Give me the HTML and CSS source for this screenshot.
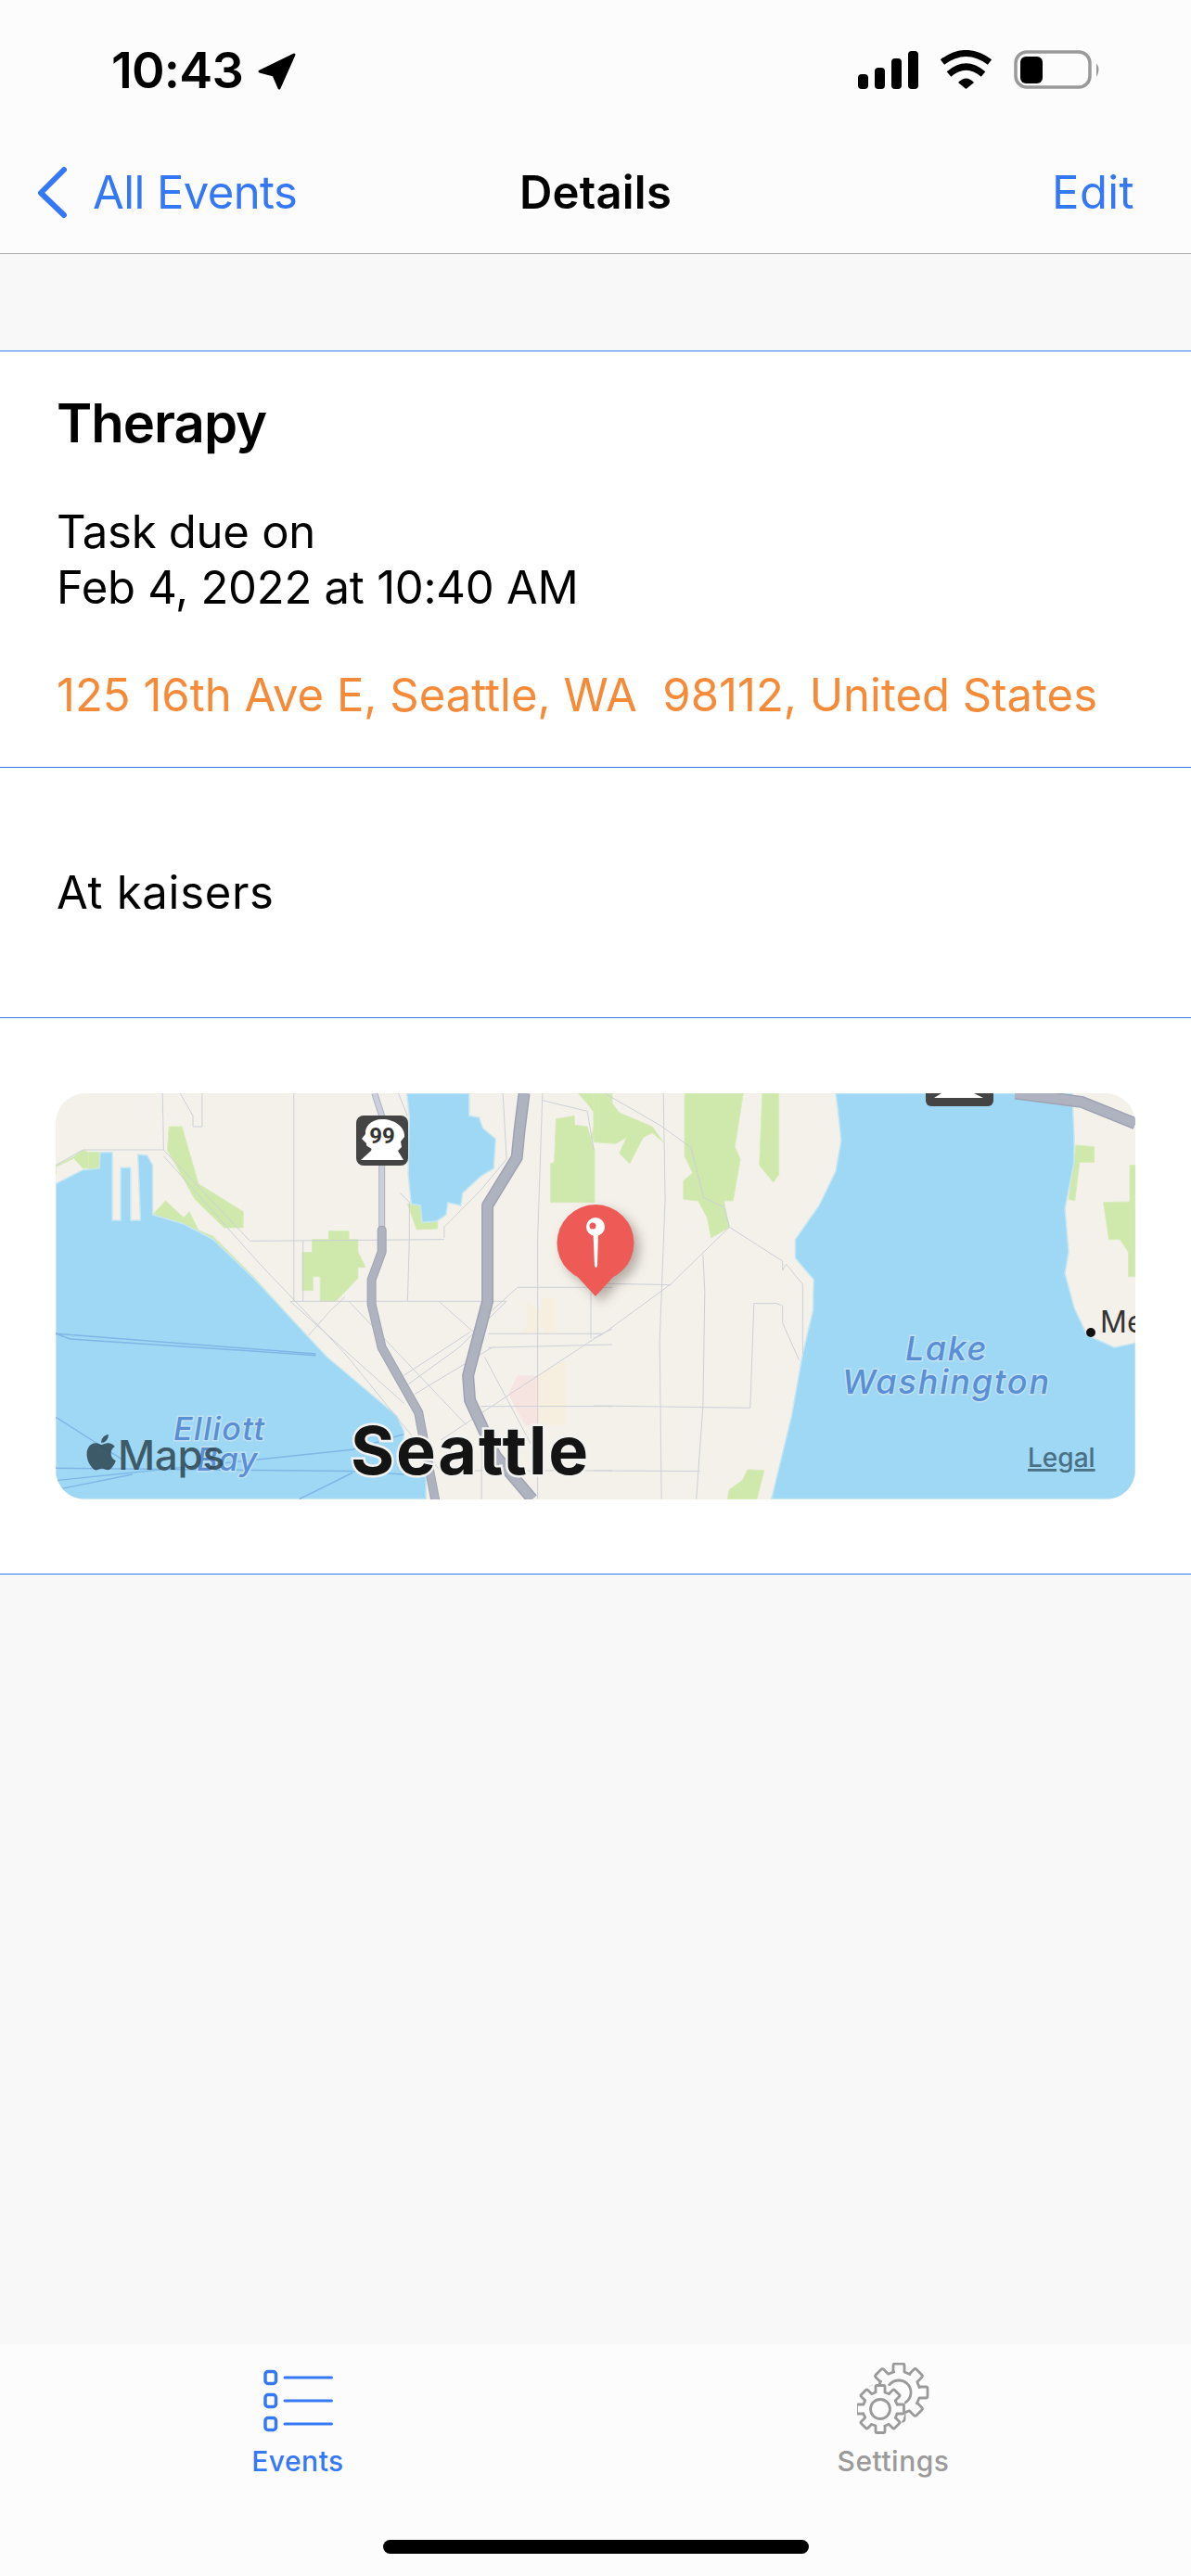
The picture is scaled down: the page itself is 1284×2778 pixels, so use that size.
FILE: index.html
```html
<!DOCTYPE html>
<html lang="en">
<head>
<meta charset="utf-8">
<title>Details</title>
<link rel="stylesheet" href="styles.css">
</head>
<body>
<div class="screen">
  <header class="header">
    <div class="status">
      <div class="status-time">
        <span class="time">10:43</span>
        <svg class="arrow" width="46" height="44" viewBox="0 0 46 44"><path d="M43 5 L6 23 L21 27 L27 41 Z" fill="#000" stroke="#000" stroke-width="3" stroke-linejoin="round"/></svg>
      </div>
      <div class="status-icons">
        <svg width="65" height="42" viewBox="0 0 65 42"><rect x="0" y="26" width="11" height="16" rx="4"/><rect x="18" y="19" width="11" height="23" rx="4"/><rect x="36" y="9" width="11" height="33" rx="4"/><rect x="54" y="1" width="11" height="41" rx="4"/></svg>
        <svg width="57" height="42" viewBox="0 0 57 42"><path d="M3 13 Q28.500 -6 54 13" fill="none" stroke="#000" stroke-width="7"/><path d="M10 26 Q28.500 10 47 26" fill="none" stroke="#000" stroke-width="7"/><path d="M20 35 L28.500 42 L37 35 Q28.500 26 20 35 Z"/></svg>
        <svg width="94" height="42" viewBox="0 0 94 42"><rect x="2" y="2" width="80" height="38" rx="12" fill="none" stroke="#999" stroke-width="3.500"/><rect x="7" y="7" width="24" height="29" rx="6"/><path d="M89 14 Q94 21 89 29 Z" fill="#999"/></svg>
      </div>
    </div>
    <nav class="nav">
      <a class="nav-back">
        <svg width="34" height="60" viewBox="0 0 34 60"><path d="M31 5 L6 30 L31 54" fill="none" stroke="#3478f6" stroke-width="6" stroke-linecap="round" stroke-linejoin="round"/></svg>
        <span>All Events</span>
      </a>
      <div class="nav-title">Details</div>
      <a class="nav-edit">Edit</a>
    </nav>
  </header>

  <div class="band"></div>

  <section class="card card-info">
    <h1 class="title">Therapy</h1>
    <p class="due">Task due on<br>Feb 4, 2022 at 10:40 AM</p>
    <p class="address">125 16th Ave E, Seattle, WA  98112, United States</p>
  </section>

  <section class="card card-note">At kaisers</section>

  <section class="card card-map">
    <div class="map">
      <svg class="map-svg" width="1164" height="438" viewBox="0 0 1164 438">
        <rect width="1164" height="438" fill="#f4f1ea"/>
        <g transform="matrix(.3954 0 0 .3333 -20 -19)">
          <path class="tint" d="M1335 735 L1375 760 L1375 720 L1415 720 L1415 832 L1385 832 L1375 805 L1365 832 L1320 832 L1335 815 Z"/>
          <path class="tint" d="M1365 970 L1440 920 L1440 1130 L1365 1130 Z"/>
          <path class="tint-pink" d="M1310 970 L1365 970 L1365 1130 L1330 1130 L1285 1030 Z"/>
          <path class="park" d="M51 320 L51 295 L100 268 L125 300 L160 298 L170 248 L140 248 L125 240 L100 262 L51 290 Z"/>
          <path class="park" d="M140 248 L205 248 L170 300 L140 302 Z"/>
          <path class="park" d="M360 165 L395 165 L440 350 L562 440 L562 492 L510 492 L430 400 L355 240 Z"/>
          <path class="park" d="M315 450 L350 405 L400 460 L415 440 L440 500 L480 520 L590 650 L735 840 L600 690 L480 540 L400 480 Z"/>
          <path class="park" d="M750 530 L795 530 L795 503 L850 503 L850 530 L875 530 L875 570 L895 620 L875 620 L875 655 L815 730 L772 730 L772 650 L752 650 L752 695 L723 695 L723 572 L750 572 Z"/>
          <path class="park" d="M1010 415 L1045 420 L1050 475 L1092 470 L1092 495 L1035 498 Z"/>
          <path class="park" d="M1415 140 L1465 130 L1465 160 L1500 165 L1520 240 L1520 410 L1400 410 L1400 285 L1410 280 Z"/>
          <path class="park" d="M1475 57 L1568 57 L1568 215 L1510 205 L1525 130 L1500 90 Z"/>
          <path class="water" d="M51 350 L125 305 L170 300 L172 248 L205 248 L205 468 L228 468 L228 298 L255 298 L255 468 L282 468 L275 255 L300 258 L315 290 L315 450 L400 480 L480 530 L590 655 L735 840 L790 910 L880 1000 L980 1100 L1000 1150 L1000 1250 L1060 1300 L1060 1370 L51 1370 Z"/>
          <path class="water" d="M1008 57 L1178 57 L1178 130 L1205 135 L1215 170 L1250 205 L1245 300 L1210 325 L1160 380 L1155 420 L1120 410 L1115 450 L1090 470 L1050 475 L1045 420 L1020 415 L1012 320 L1015 130 Z"/>
          <path class="ferry" d="M51 835 L90 852 L760 905 M51 835 L760 900 M51 1105 L230 1240 M51 1270 L860 1280 M51 1310 L860 1210 M51 1340 L260 1290 M715 1370 L860 1285 M860 1280 L1000 1290 M860 1210 L1000 1160"/>
          <path class="road" d="M342 57 L345 240 L125 240 L51 290 M700 57 L700 730 M725 535 L725 730 M1015 530 L1010 730 M1378 57 L1365 520 L1365 1370 M1510 700 L1510 850 M1212 1130 L1212 1370 M580 535 L1110 530 M690 730 L1280 730 M1310 685 L1568 685 M1230 835 L1540 835 M1230 880 L1568 870 M1210 1070 L1568 1070 M1100 1278 L1568 1278 M345 240 L580 535 M345 260 L600 600 L840 900 L1100 1280 M690 730 L1000 1060 M850 730 L1170 1130 M1095 730 L1200 840 M740 840 L800 760 L840 715 M1280 730 L1150 880 L1010 1000 M1310 685 L1240 760 M1568 820 L1540 835 L1290 1030 L1100 1180 M1000 970 L1180 830 M1030 1030 L1240 880 M1220 910 L1350 1200 M390 57 L425 130 L425 165 L450 165 L450 57 M985 57 L1010 130 M990 380 L1015 410 L1015 530 M1110 525 L1110 490 L1210 370 L1280 270 L1270 57 M1378 80 L1500 115 L1518 240"/>
          <path class="hw-thin-o" d="M920 57 L940 130 L940 490"/>
          <path class="hw-thin" d="M920 57 L940 130 L940 490"/>
          <path class="hw-mid-o" d="M940 500 L940 570 L912 660 L912 740 L940 880 L1040 1090 L1085 1370"/>
          <path class="hw-mid" d="M940 500 L940 570 L912 660 L912 740 L940 880 L1040 1090 L1085 1370"/>
          <path class="hw-o" d="M1328 57 L1315 180 L1308 265 L1228 420 L1228 730 L1175 970 L1180 1050 L1250 1230 L1350 1370"/>
          <path class="hw" d="M1328 57 L1315 180 L1308 265 L1228 420 L1228 730 L1175 970 L1180 1050 L1250 1230 L1350 1370"/>
        </g>
        <g transform="matrix(.3954 0 0 .3333 580 -19)">
          <path class="park" d="M248 57 L408 57 L385 230 L400 270 L380 405 L355 405 L370 490 L320 525 L310 460 L285 405 L245 400 L245 340 L270 315 L248 260 Z"/>
          <path class="park" d="M460 57 L505 57 L505 320 L490 345 L452 290 Z"/>
          <path class="park" d="M0 57 L30 57 L70 120 L160 165 L190 215 L160 185 L135 200 L98 285 L70 250 L90 200 L60 220 L0 215 Z"/>
          <path class="park" d="M1315 225 L1365 230 L1365 280 L1325 280 L1312 405 L1295 400 Z"/>
          <path class="park" d="M1462 290 L1477 290 L1477 650 L1458 650 L1458 570 L1435 530 L1405 530 L1390 410 L1462 408 Z"/>
          <path class="park" d="M420 1275 L465 1277 L445 1370 L365 1370 L370 1340 L405 1310 Z"/>
          <path class="water" d="M660 57 L1305 57 L1310 200 L1310 280 L1285 430 L1295 570 L1285 640 L1310 750 L1345 840 L1420 880 L1477 865 L1477 1370 L485 1370 L540 1100 L570 900 L598 760 L600 660 L550 590 L550 530 L615 420 L660 310 L675 210 L665 100 Z"/>
          <path class="road" d="M30 57 L180 160 L265 232 L300 395 L355 425 L370 490 L210 675 L20 840 L0 850 M370 490 L515 600 L515 630 L525 610 L570 675 L570 900 M190 57 L195 400 L180 860 L185 1370 M298 578 L303 700 L298 1070 L280 1370 M437 737 L500 737 L515 745 L515 800 L560 920 M437 737 L427 1075 L0 1068 M0 1278 L290 1280 M0 672 L210 677"/>
          <path class="hw-o" d="M1150 57 L1330 85 L1477 155"/>
          <path class="hw" d="M1150 57 L1330 85 L1477 155"/>
        </g>

        <rect x="324" y="24" width="56" height="54" rx="8" fill="#444"/>
        <path d="M352 28 C340 28 333 36 334 44 L330 49 L335 54 L335 56 C338 60 342 58 340 62 L329 72 L375 72 L369 62 L373 58 L372 52 L376 47 C377 36 365 28 352 28 Z" fill="#fff"/>
        <text class="shield-num" x="352" y="54" text-anchor="middle">99</text>
        <rect x="938" y="-10" width="73" height="24" rx="6" fill="#444"/>
        <path d="M955 0 L990 0 L1000 5 L947 5 Z" fill="#fff"/>

        <g class="pin">
          <circle cx="582" cy="161.500" r="41.500" fill="#ee5b57"/>
          <path d="M560 195 L582 219 L604 195 Z" fill="#ee5b57"/>
        </g>
        <path d="M579.500 150 H585 L584 186 Q582.500 190 581 186 Z" fill="#fff"/>
        <circle cx="582" cy="144" r="10" fill="#fff"/>
        <circle cx="579" cy="143" r="3.500" fill="#ee5b57"/>

        <text class="water-label" x="127" y="374" font-size="34">Elliott</text>
        <text class="water-label" x="152" y="407" font-size="34">Bay</text>
        <text class="water-label" x="916" y="288" font-size="36">Lake</text>
        <text class="water-label water-label-wide" x="848" y="324" font-size="36">Washington</text>
        <circle cx="1116" cy="258" r="5" fill="#111"/>
        <text class="place" x="1126" y="258">Me</text>
        <text class="city" x="318" y="411">Seattle</text>
        <path transform="translate(30 368) scale(1.600)" d="M12.152 6.896c-.948 0-2.415-1.078-3.960-1.040-2.040.027-3.910 1.183-4.961 3.014-2.117 3.675-.546 9.103 1.519 12.090 1.013 1.454 2.208 3.090 3.792 3.039 1.520-.065 2.090-.987 3.935-.987 1.831 0 2.350.987 3.960.948 1.637-.026 2.676-1.480 3.676-2.948 1.156-1.688 1.636-3.325 1.662-3.415-.039-.013-3.182-1.221-3.220-4.857-.026-3.040 2.480-4.494 2.597-4.559-1.429-2.090-3.623-2.324-4.390-2.376-2-.156-3.675 1.090-4.610 1.090zM15.530 3.830c.843-1.012 1.400-2.427 1.245-3.830-1.207.052-2.662.805-3.532 1.818-.780.896-1.454 2.338-1.273 3.714 1.338.104 2.715-.688 3.559-1.701" fill="#2c4450" fill-opacity=".85"/>
        <text class="maps" x="67" y="406">Maps</text>
        <text class="legal" x="1048" y="403">Legal</text>
      </svg>
    </div>
  </section>

  <main class="rest"></main>

  <footer class="tabbar">
    <div class="tabs">
      <a class="tab tab-active">
        <svg width="75" height="75" viewBox="0 0 75 75">
          <g fill="none" stroke="#3478f6" stroke-width="3.500">
            <rect x="2" y="8" width="11.500" height="13" rx="3"/>
            <rect x="2" y="33" width="11.500" height="13" rx="3"/>
            <rect x="2" y="58" width="11.500" height="13" rx="3"/>
          </g>
          <g stroke="#3478f6" stroke-width="3" stroke-linecap="round">
            <path d="M23 14.500 H73.500 M23 39.500 H73.500 M23 64.500 H73.500"/>
          </g>
        </svg>
        <span>Events</span>
      </a>
      <a class="tab">
        <svg width="78" height="78" viewBox="0 0 78 78">
          <defs>
            <path id="tooth-big" d="M-6 -22 L-6 -29 Q-6 -31 -4 -31 L4 -31 Q6 -31 6 -29 L6 -22 L13 -19"/>
            <path id="tooth-small" d="M-5 -18 L-5 -24 Q-5 -25.500 -3.500 -25.500 L3.500 -25.500 Q5 -25.500 5 -24 L5 -18 L10.500 -16"/>
          </defs>
          <g class="gear" transform="translate(45 32)">
            <use href="#tooth-big"/>
            <use href="#tooth-big" transform="rotate(45)"/>
            <use href="#tooth-big" transform="rotate(90)"/>
            <use href="#tooth-big" transform="rotate(135)"/>
            <use href="#tooth-big" transform="rotate(180)"/>
            <use href="#tooth-big" transform="rotate(225)"/>
            <use href="#tooth-big" transform="rotate(270)"/>
            <use href="#tooth-big" transform="rotate(315)"/>
            <circle r="13"/>
          </g>
          <circle class="gear-mask" cx="25" cy="50" r="27"/>
          <g class="gear" transform="translate(25 50)">
            <use href="#tooth-small"/>
            <use href="#tooth-small" transform="rotate(45)"/>
            <use href="#tooth-small" transform="rotate(90)"/>
            <use href="#tooth-small" transform="rotate(135)"/>
            <use href="#tooth-small" transform="rotate(180)"/>
            <use href="#tooth-small" transform="rotate(225)"/>
            <use href="#tooth-small" transform="rotate(270)"/>
            <use href="#tooth-small" transform="rotate(315)"/>
            <circle r="10.500"/>
          </g>
        </svg>
        <span>Settings</span>
      </a>
    </div>
    <div class="home-indicator"></div>
  </footer>
</div>
</body>
</html>
```
FILE: styles.css
```css
* { box-sizing: border-box; }
html, body { margin: 0; padding: 0; }
body { font-family: Inter, "Liberation Sans", sans-serif; color: #000; background: #f8f8f8; }

.screen { width: 1284px; height: 2778px; display: flex; flex-direction: column; overflow: hidden; }

.header { height: 274px; background: #fcfcfc; border-bottom: 1px solid #ababab; }
.status { display: flex; justify-content: space-between; padding: 54px 97px 0 120px; height: 98px; }
.status-time { display: flex; align-items: flex-start; gap: 12px; }
.time { font-size: 54px; line-height: 44px; font-weight: 600; letter-spacing: -0.8px; }
.status-icons { display: flex; gap: 23px; align-items: flex-start; }

.nav { margin-top: 80px; display: grid; grid-template-columns: 1fr auto 1fr; align-items: center; font-size: 49px; line-height: 60px; padding: 0 38px; }
.nav-back { display: flex; align-items: center; gap: 28px; color: #3478f6; letter-spacing: -0.6px; }
.nav-title { font-weight: 600; letter-spacing: 0.2px; }
.nav-edit { justify-self: end; color: #3478f6; margin-right: 23px; letter-spacing: 0.4px; }

.band { height: 105px; background: #f8f8f8; border-bottom: 1px solid #3478f6; }

.card { background: #fff; border-bottom: 1px solid #3478f6; }
.card-info { height: 449px; padding: 42px 60px 0 61px; }
.title { margin: 0; font-size: 58px; line-height: 70px; font-weight: 600; letter-spacing: -1px; }
.due { margin: 53px 0 0; font-size: 49px; line-height: 60px; letter-spacing: -0.25px; }
.address { margin: 56px 0 0; font-size: 49px; line-height: 60px; color: #f58a38; white-space: pre; }
.card-note { height: 270px; display: flex; align-items: center; padding-left: 61px; font-size: 49px; line-height: 60px; letter-spacing: 0.7px; }
.card-map { height: 600px; padding: 81px 60px 0; }

.map { width: 1164px; height: 438px; border-radius: 32px; overflow: hidden; }
.map-svg { display: block; }

.park { fill: #cfe8ab; stroke: #d8ebbb; stroke-width: 1; vector-effect: non-scaling-stroke; }
.water { fill: #9ed8f4; stroke: #c6e6f2; stroke-width: 1.500; vector-effect: non-scaling-stroke; }
.tint { fill: #f6efdf; }
.tint-pink { fill: #f6e4e0; }
.road { fill: none; stroke: #cdd0d8; stroke-width: 1; vector-effect: non-scaling-stroke; }
.ferry { fill: none; stroke: #7fb6e6; stroke-width: 1.500; vector-effect: non-scaling-stroke; }
.hw, .hw-o, .hw-mid, .hw-mid-o, .hw-thin, .hw-thin-o { fill: none; vector-effect: non-scaling-stroke; stroke-linejoin: round; }
.hw-o { stroke: #9ea3b3; stroke-width: 13; }
.hw { stroke: #afb3bf; stroke-width: 10; }
.hw-mid-o { stroke: #9ea3b3; stroke-width: 10; stroke-linecap: round; }
.hw-mid { stroke: #afb3bf; stroke-width: 8; stroke-linecap: round; }
.hw-thin-o { stroke: #aeb2c0; stroke-width: 7; }
.hw-thin { stroke: #ccd0dc; stroke-width: 5; }

.pin { filter: drop-shadow(6px 6px 6px rgba(60, 50, 40, .35)); }
.shield-num { font-family: Roboto, sans-serif; font-size: 24px; font-weight: 700; fill: #333; }
.water-label { font-family: Inter, sans-serif; font-style: italic; font-weight: 500; letter-spacing: 1.500px; fill: #5a8fd3; stroke: #c2e2f3; stroke-width: 3px; paint-order: stroke; }
.water-label-wide { letter-spacing: 1.900px; }
.place { font-family: Inter, sans-serif; font-size: 32px; fill: #333; }
.city { font-family: Inter, sans-serif; font-size: 72px; font-weight: 700; letter-spacing: 1.800px; fill: #141414; stroke: #f2f2f0; stroke-width: 5px; paint-order: stroke; }
.maps { font-family: Inter, sans-serif; font-size: 44px; font-weight: 500; letter-spacing: -0.3px; fill: #2c4450; fill-opacity: .85; }
.legal { font-family: Inter, sans-serif; font-size: 28px; font-weight: 500; fill: #4a7085; text-decoration: underline; }

.rest { flex: 1; background: #f8f8f8; }

.tabbar { height: 250px; background: #fcfcfc; display: flex; flex-direction: column; align-items: center; }
.tabs { width: 100%; display: grid; grid-template-columns: 1fr 1fr; padding-top: 20px; }
.tab { display: flex; flex-direction: column; align-items: center; font-size: 30px; line-height: 36px; font-weight: 500; letter-spacing: 0.5px; color: #9a9a9a; }
.tab svg { height: 78px; margin-bottom: 10px; }
.tab-active { color: #3478f6; }
.gear use, .gear circle { fill: none; stroke: #9a9a9a; stroke-width: 2.800; stroke-linejoin: round; }
.gear-mask { fill: #fcfcfc; }
.home-indicator { width: 459px; height: 15px; border-radius: 8px; background: #000; margin-top: auto; margin-bottom: 24px; }
```
